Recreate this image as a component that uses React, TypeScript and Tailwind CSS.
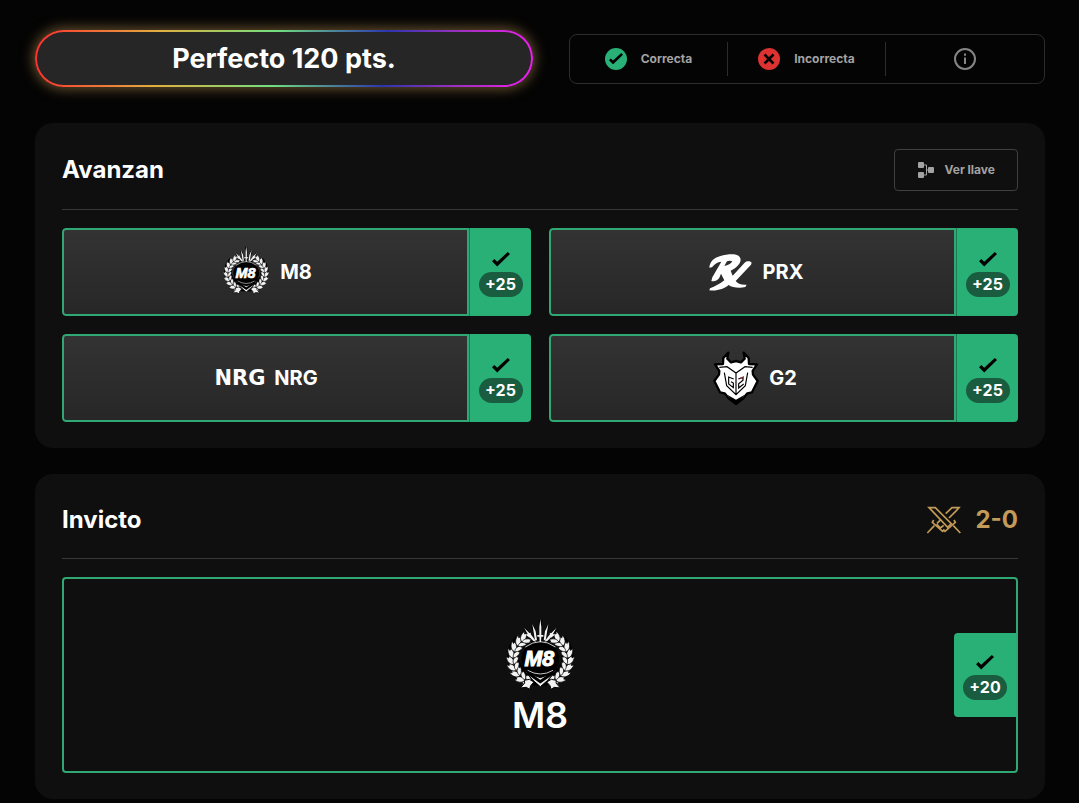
import type { ReactNode } from "react";

const LEAVES = [20, 35, 50, 65, 80, 95, 110, 125, 138];

function CheckMark({ className }: { className?: string }) {
  return (
    <svg viewBox="0 0 18 15" className={className} aria-hidden>
      <path d="M0 9.2 2.3 7 5.2 9.8 15.8 0 18 2.1 5.2 14.6Z" fill="currentColor" />
    </svg>
  );
}

// One half of the laurel wreath; the other half is mirrored.
function Laurel() {
  return (
    <g fill="#f2f2f2" stroke="#000" strokeWidth="2">
      {LEAVES.map((deg) => {
        const a = (deg * Math.PI) / 180;
        const x = -Math.sin(a) * 80;
        const y = Math.cos(a) * 72;
        return (
          <g key={deg} transform={`translate(${x} ${y})`}>
            <path
              d="M0 2C-11 -3 -15 -16 -6 -32L-3 -24L2 -28C7 -18 7 -8 0 2Z"
              transform={`rotate(${deg - 116})`}
            />
            <path
              d="M0 2C-8 -6 -8 -16 1 -29L3 -22L7 -24C9 -14 7 -6 0 2Z"
              transform={`rotate(${deg - 62})`}
            />
          </g>
        );
      })}
    </g>
  );
}

function M8Logo({ className }: { className?: string }) {
  return (
    <svg viewBox="15 18 240 240" className={className} aria-hidden>
      <g fill="none" stroke="#000" strokeWidth="9">
        <path d="M75 88A82 72 0 1 0 197 88" strokeWidth="34" />
        <path d="M136 26V90M113 45 126 88M159 45 146 88M90 54 116 92M182 54 156 92" />
      </g>
      <g transform="translate(136 146)">
        <Laurel />
        <g transform="scale(-1 1)">
          <Laurel />
        </g>
      </g>
      <ellipse cx="136" cy="143" rx="57" ry="53" fill="#000" />
      <g fill="#f2f2f2">
        <path d="M136 24 139 48V72H145V77H139L138 94H134L133 77H127V72H133V48Z" />
        <path d="M112 40 122 61 126 88 120 88ZM160 40 150 61 146 88 152 88Z" />
        <path d="M88 51 109 72 124 92 115 90 103 78ZM184 51 163 72 148 92 157 90 169 78Z" />
        <path d="M92 71 108 65 104 80ZM180 71 164 65 168 80Z" />
      </g>
      <path
        d="M91 108Q136 76 181 108M98 178Q136 200 174 178"
        fill="none"
        stroke="#f2f2f2"
        strokeWidth="2.5"
      />
      <g fill="#f2f2f2" stroke="#000" strokeWidth="3">
        <path d="M88 178 116 193 136 200 156 193 184 178 158 208 136 227 114 208Z" />
        <path d="M103 205 117 213 107 224 104 235 94 229 76 231 89 216 88 208ZM169 205 155 213 165 224 168 235 178 229 196 231 183 216 184 208Z" />
      </g>
      <path d="M96 184 136 212 176 184" fill="none" stroke="#000" strokeWidth="9" />
      <g
        textAnchor="middle"
        fill="#fff"
        className="font-['Liberation_Sans',sans-serif] text-[64px] font-bold italic"
      >
        <text x="133" y="166" stroke="#000" strokeWidth="12">
          M8
        </text>
        <text x="133" y="166" stroke="#fff" strokeWidth="3">
          M8
        </text>
      </g>
    </svg>
  );
}

function PrxLogo({ className }: { className?: string }) {
  return (
    <svg viewBox="4 12 162 162" className={className} fill="#fff" aria-hidden>
      <path d="M26 80C27 66 36 54 49 49C66 41 93 38 106 41C121 44 123 58 116 68C109 78 99 85 90 89L96 104L132 65C139 59 148 60 153 65L151 71L105 120C111 128 120 132 138 131L134 138C117 142 94 140 84 132C70 143 50 151 26 148L28 142C43 137 58 128 71 118L61 98L56 110C51 118 43 122 32 120L35 109L62 62C50 63 41 69 34 79Z" />
      <path d="M79 61 71 75C82 74 91 68 95 61C90 59 85 59 79 61Z" fill="#2d2d2d" />
    </svg>
  );
}

function NrgLogo({ className }: { className?: string }) {
  return (
    <svg viewBox="0 0 54 54" className={className} aria-hidden>
      <text
        x="27"
        y="34"
        textAnchor="middle"
        fill="#fff"
        className="font-['DejaVu_Sans',sans-serif] text-[21px] font-bold"
      >
        NRG
      </text>
    </svg>
  );
}

function G2Logo({ className }: { className?: string }) {
  return (
    <svg viewBox="22 15 162 162" className={className} aria-hidden>
      <path
        d="M83 20 80 38 91 49 106 45 121 49 132 38 129 20 144 36 145 54 169 55 156 75 157 86 171 105 154 139 140 142 127 158 106 174 85 158 72 142 58 139 41 105 55 86 56 75 43 55 67 54 68 36Z"
        fill="#fff"
        stroke="#000"
        strokeWidth="7"
        strokeLinejoin="round"
      />
      <path
        d="M56 64 79 62 106 81 133 62 156 64M71 80 78 119 106 146 134 119 141 80M106 82V146"
        fill="none"
        stroke="#000"
        strokeWidth="3.5"
      />
      <path
        d="M99 99 84 93V114L98 125V111L91 107M113 99 127 94V103L114 113V126L129 114"
        fill="none"
        stroke="#000"
        strokeWidth="3.5"
      />
      <path d="M117 98 130 92" stroke="#b4232b" strokeWidth="3" />
      <path d="M80 146 106 161 132 146 122 160 106 172 90 160Z" fill="#000" />
    </svg>
  );
}

function SwordsIcon({ className }: { className?: string }) {
  return (
    <svg
      viewBox="0 0 102 84"
      className={className}
      fill="none"
      stroke="currentColor"
      strokeWidth="5"
      aria-hidden
    >
      <path d="M6 5H25L73 53 62 64 14 13Z" />
      <path d="M81 42 85 49 54 76 49 71M79 59 100 81" />
      <path d="M56 23 75 5H96L88 14 66 36M42 40 30 52M50 58 40 66 29 54" />
      <path d="M20 42 16 49 47 76 52 71M22 59 1 81" />
    </svg>
  );
}

function BracketIcon({ className }: { className?: string }) {
  return (
    <svg viewBox="0 0 18 18" className={className} aria-hidden>
      <path d="M6 4H9.5V14H6M9.5 9H12" fill="none" stroke="currentColor" />
      <g fill="currentColor">
        <rect x="1" y="1" width="6" height="6" rx="1" />
        <rect x="1" y="11" width="6" height="6" rx="1" />
        <rect x="11" y="6" width="6" height="6" rx="1" />
      </g>
    </svg>
  );
}

function InfoIcon({ className }: { className?: string }) {
  return (
    <svg viewBox="0 0 22 22" className={className} aria-hidden>
      <circle cx="11" cy="11" r="10" fill="none" stroke="currentColor" strokeWidth="2" />
      <path d="M10 9.5H12V16H10ZM10 5.5H12V7.7H10Z" fill="currentColor" />
    </svg>
  );
}

function Points({ value }: { value: number }) {
  return (
    <>
      <span className="flex h-6 items-center">
        <CheckMark className="w-[18px] text-black" />
      </span>
      <span className="w-11 rounded-full bg-[#195c40] text-center text-base leading-[25px] font-bold">
        +{value}
      </span>
    </>
  );
}

const TEAMS = [
  { name: "M8", Logo: M8Logo, points: 25 },
  { name: "PRX", Logo: PrxLogo, points: 25 },
  { name: "NRG", Logo: NrgLogo, points: 25 },
  { name: "G2", Logo: G2Logo, points: 25 },
];

function Section({
  title,
  aside,
  children,
}: {
  title: string;
  aside: ReactNode;
  children: ReactNode;
}) {
  return (
    <section className="rounded-[18px] bg-[#0f0f0f] px-[27px] py-[26px]">
      <header className="mb-[18px] flex items-center justify-between border-b border-[#383838] pb-[18px]">
        <h2 className="text-2xl leading-10 font-bold">{title}</h2>
        {aside}
      </header>
      {children}
    </section>
  );
}

export default function App() {
  return (
    <main className="min-h-screen bg-[#040404] pt-[30px] pr-[34px] pb-1 pl-[35px] font-['Inter',sans-serif] text-white">
      <div className="mb-9 flex items-center gap-9">
        <div className="flex-[497] rounded-full bg-[linear-gradient(95deg,#ff3030,#e0b040_25%,#70e080_48%,#2c35b0_70%,#a030c0_85%,#f020f0)] p-[2px] shadow-[0_0_14px_1px_rgba(230,180,100,0.5)]">
          <h1 className="rounded-full bg-[#262626] text-center text-[27px] leading-[53px] font-bold">
            Perfecto 120 pts.
          </h1>
        </div>

        <div className="grid h-[50px] flex-[477] grid-cols-3 items-center divide-x divide-[#2c2c2c] rounded-lg border border-[#2c2c2c] text-xs font-bold text-[#a3a3a3]">
          <div className="flex h-[34px] items-center justify-center gap-[14px]">
            <span className="flex size-[22px] items-center justify-center rounded-full bg-[#29b077]">
              <CheckMark className="w-[14px] text-black" />
            </span>
            Correcta
          </div>
          <div className="flex h-[34px] items-center justify-center gap-[14px]">
            <svg viewBox="0 0 22 22" className="size-[22px]" aria-hidden>
              <circle cx="11" cy="11" r="11" fill="#dc3232" />
              <path d="M6.5 6.5 15.5 15.5M15.5 6.5 6.5 15.5" stroke="#000" strokeWidth="2.5" />
            </svg>
            Incorrecta
          </div>
          <button
            type="button"
            aria-label="Información"
            className="flex h-[34px] items-center justify-center text-[#858585]"
          >
            <InfoIcon className="size-[22px]" />
          </button>
        </div>
      </div>

      <div className="flex flex-col gap-[26px]">
        <Section
          title="Avanzan"
          aside={
            <button
              type="button"
              className="flex h-[42px] items-center gap-[10px] rounded border border-[#404040] px-[22px] text-xs font-bold text-[#a3a3a3]"
            >
              <BracketIcon className="size-[18px]" />
              Ver llave
            </button>
          }
        >
          <ul className="grid grid-cols-2 gap-[18px]">
            {TEAMS.map(({ name, Logo, points }) => (
              <li key={name} className="flex h-[88px] overflow-hidden rounded">
                <div className="flex flex-1 items-center justify-center gap-[7px] rounded-l border-2 border-[#2fa873] bg-linear-to-b from-[#333333] to-[#272727] text-xl font-bold">
                  <Logo className="size-[54px]" />
                  {name}
                </div>
                <div className="flex w-[62px] flex-col items-center justify-center border-l border-[#1c7c54] bg-[#29b077]">
                  <Points value={points} />
                </div>
              </li>
            ))}
          </ul>
        </Section>

        <Section
          title="Invicto"
          aside={
            <div className="flex items-center gap-[14px] text-2xl leading-10 font-bold text-[#c39b58]">
              <SwordsIcon className="w-[34px]" />
              2-0
            </div>
          }
        >
          <div className="relative flex h-[196px] flex-col items-center justify-center rounded border-2 border-[#2fa873]">
            <M8Logo className="size-20" />
            <span className="text-4xl leading-9 font-semibold">M8</span>
            <div className="absolute inset-y-0 right-0 flex items-center">
              <div className="flex h-[84px] w-[62px] flex-col items-center justify-center rounded-l bg-[#29b077]">
                <Points value={20} />
              </div>
            </div>
          </div>
        </Section>
      </div>
    </main>
  );
}
